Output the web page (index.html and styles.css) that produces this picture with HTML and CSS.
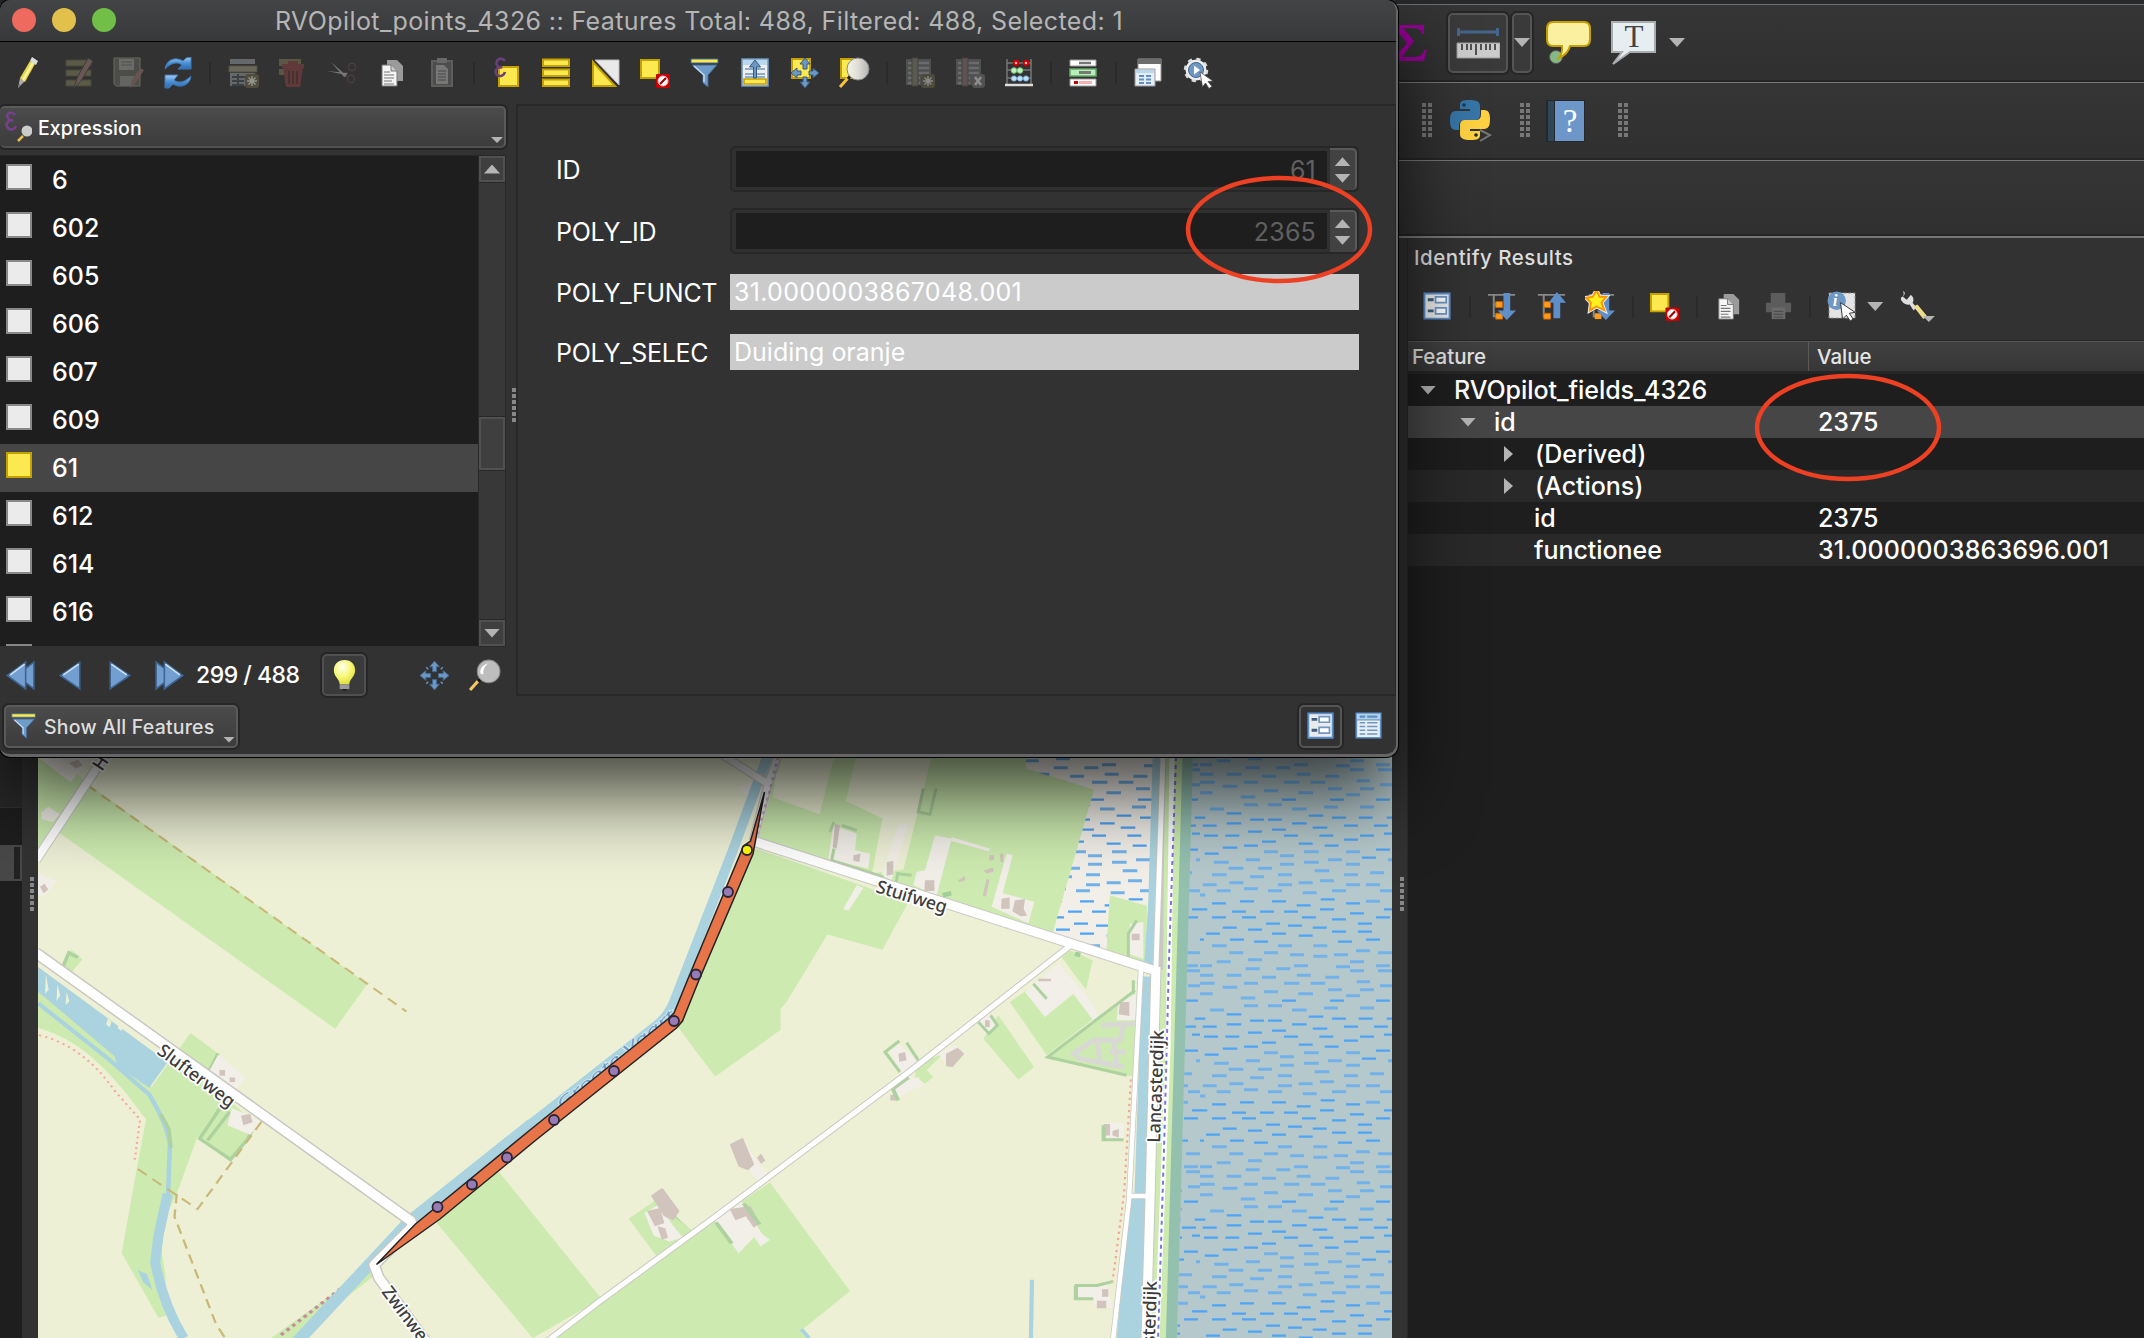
FILE: index.html
```html
<!DOCTYPE html>
<html lang="en">
<head>
<meta charset="utf-8">
<title>RVOpilot_points_4326</title>
<link rel="stylesheet" href="styles.css">
</head>
<body>
<svg class="defs" aria-hidden="true">
  <defs>
    <linearGradient id="steel" x1="0" y1="0" x2="0" y2="1"><stop offset="0" stop-color="#a9cdf0"/><stop offset=".5" stop-color="#4a8fd4"/><stop offset="1" stop-color="#2f6cb0"/></linearGradient>
    <radialGradient id="bulbfill" cx=".4" cy=".3" r=".7"><stop offset="0" stop-color="#fffff0"/><stop offset=".6" stop-color="#f6f672"/><stop offset="1" stop-color="#dfe040"/></radialGradient>
    <linearGradient id="glass" x1="0" y1="0" x2="1" y2="0"><stop offset="0" stop-color="#f4f4ea"/><stop offset=".5" stop-color="#deded6"/><stop offset="1" stop-color="#b4b4b0"/></linearGradient>
    <symbol id="pencil" viewBox="0 0 32 32"><path d="M5 31l2-10 5 3z" fill="#aaa"/><path d="M7 21L17 4l5 3L12 25z" fill="#e8d64a"/><path d="M9 22L19 5l2 1L11 24z" fill="#fbf3a0"/><path d="M17 4l2-4 6 4-2 4z" fill="#ddd"/><path d="M5 31l1-4 2 1z" fill="#777"/></symbol>
    <symbol id="edits" viewBox="0 0 32 32"><path d="M3 3h25v6H3zM3 13h25v6H3zM3 23h25v6H3z" fill="#5b5a48" stroke="#494838"/><path d="M11 31l3-10L25 1l5 3-12 20z" fill="#675854" stroke="#403b39"/></symbol>
    <symbol id="save" viewBox="0 0 32 32"><path d="M2 1h26v28H4l-2-2z" fill="#4c4c49" stroke="#686860"/><path d="M7 2h15v11H7z" fill="#6b6b69"/><path d="M9 5h11M9 8h11" stroke="#50504e"/><path d="M8 19h14v10H8z" fill="#646462"/><path d="M18 31l2-8 8-12 4 2-9 14z" fill="#675450"/></symbol>
    <symbol id="refresh" viewBox="0 0 32 32"><path d="M3 12C4 3 13-1 21 4l3-3 5-1v12H16l4-4C15 4 9 6 3 12z" fill="url(#steel)" stroke="#3c78b8"/><path d="M29 19c-1 9-10 13-18 8l-4 4H3V18h13l-4 5c5 4 11 2 17-4z" fill="url(#steel)" stroke="#3c78b8"/></symbol>
    <symbol id="tablenew" viewBox="0 0 32 32"><path d="M3 2h25v5H3zM3 16h25v13H3z" fill="#66696c"/><path d="M2 9h28v6H2z" fill="#6a685a" stroke="#55513f"/><path d="M5 20h20M5 24h12M5 28h12M11 17v11" stroke="#3d4043" stroke-width="2"/><rect x="18" y="17" width="14" height="14" rx="3" fill="#504d3c"/><path d="M25 19v10M20 24h10M21.500 20.500l7 7M28.500 20.500l-7 7" stroke="#92918a" stroke-width="1.500"/></symbol>
    <symbol id="trash" viewBox="0 0 32 32"><path d="M3 2h22v7H3zM3 12h10v6H3z" fill="#5a5843"/><path d="M7 11h20l-3 19H10zM6 7h22v4H6zM12 4h10v3H12z" fill="#603a3a"/><path d="M13 14v13M17 14v13M21 14v13" stroke="#493030" stroke-width="2"/></symbol>
    <symbol id="cut" viewBox="0 0 32 32"><path d="M1 14l21 2-2 2zM5 5l16 14-3 1z" fill="#777"/><ellipse cx="26" cy="10" rx="3.500" ry="4" fill="none" stroke="#573f3f"/><ellipse cx="25" cy="22" rx="3.500" ry="4" fill="none" stroke="#573f3f"/></symbol>
    <symbol id="copy" viewBox="0 0 32 32"><path d="M11 3h10l6 6v15H11z" fill="#9b9b9b"/><path d="M6 8h9l6 6v15H6z" fill="#f5f5f5" stroke="#777"/><path d="M15 8v6h6" fill="#ccc" stroke="#777"/><path d="M8 15h6M8 18h10M8 21h10M8 24h8M8 27h10" stroke="#777" stroke-width="1.200"/></symbol>
    <symbol id="paste" viewBox="0 0 32 32"><path d="M6 4h20v25H6z" fill="#4d4d4b" stroke="#5d5d5b" stroke-width="2"/><path d="M11 1h10v5H11z" fill="#696969"/><path d="M10 8h8l4 4v15H10z" fill="#777"/><path d="M12 14h8M12 17h8M12 20h8M12 23h8" stroke="#484848"/></symbol>
    <symbol id="eps" viewBox="0 0 32 32"><path d="M9 10h19v19H9z" fill="#fce94f" stroke="#c4a000" stroke-width="2"/><path d="M15 4C11-1 5 3 7 8c1 2 3 3 5 2-6 0-8 5-5 8 3 2 7 1 8-3" fill="none" stroke="#6a3f7c" stroke-width="2.600"/></symbol>
    <symbol id="rows" viewBox="0 0 32 32"><path d="M3 2.500h26v6.500H3zM3 12.500h26v6.500H3zM3 22.500h26v6.500H3z" fill="#fce94f" stroke="#c4a000" stroke-width="2"/></symbol>
    <symbol id="invert" viewBox="0 0 32 32"><path d="M3 5v24h22z" fill="#fce94f" stroke="#c4a000" stroke-width="2"/><path d="M5 3h24v25z" fill="#e9e9e9" stroke="#bbb"/></symbol>
    <symbol id="desel" viewBox="0 0 32 32"><path d="M2 3h18v18H2z" fill="#fce94f" stroke="#c4a000" stroke-width="2"/><rect x="17" y="17" width="14" height="14" rx="1" fill="#c90000"/><circle cx="24" cy="24" r="5" fill="#fff" stroke="#e9b5b5"/><path d="M21 27l6-6" stroke="#a40000" stroke-width="2.200"/></symbol>
    <symbol id="filter" viewBox="0 0 32 32"><path d="M2 2h27v4H2z" fill="#fce94f" stroke="#3c6793"/><path d="M3 8h25l-9 10v12l-5-4v-8z" fill="#6f9bc9" stroke="#41688f"/><path d="M5 9l10 9v7" fill="none" stroke="#c6dcf2" stroke-width="1.500"/></symbol>
    <symbol id="totop" viewBox="0 0 32 32"><path d="M3 2h26v27H3z" fill="#eee" stroke="#6d97c4" stroke-width="1.600"/><path d="M4 3h24v5H4z" fill="#b9d8ee"/><path d="M6 12h20M6 17h20M6 20h20" stroke="#6d97c4" stroke-width="1.500"/><path d="M5 22h22v5H5z" fill="#fce94f" stroke="#c4a000" stroke-width="1.500"/><path d="M14.500 21V10h-4L16 3l5.500 7h-4v11z" fill="#6d97c4" stroke="#355a80"/></symbol>
    <symbol id="pan" viewBox="0 0 32 32"><path d="M3 2h18v19H3z" fill="#fce94f" stroke="#c4a000" stroke-width="2"/><path d="M16 1l5 6h-3v5h-4V7h-3zM16 31l5-6h-3v-5h-4v5h-3zM2 16l6-5v3h4v4H8v3zM30 16l-6-5v3h-4v4h4v3z" fill="#6d97c4" stroke="#355a80"/></symbol>
    <symbol id="zoomsel" viewBox="0 0 32 32"><path d="M3 2h14v19H3z" fill="#fce94f" stroke="#c4a000" stroke-width="2"/><path d="M2 30l8-9" stroke="#f5c242" stroke-width="3"/><path d="M10 22l3-4" stroke="#222" stroke-width="3"/><circle cx="20" cy="12" r="11" fill="url(#glass)" stroke="#888"/></symbol>
    <symbol id="mag" viewBox="0 0 32 32"><path d="M2 30l8-9" stroke="#f5c96a" stroke-width="3"/><path d="M10 22l3-4" stroke="#111" stroke-width="3"/><circle cx="20" cy="12" r="11" fill="#bdbdbd" stroke="#888"/><path d="M12 14c-1-6 4-9 8-10-3 2-6 6-5 11z" fill="#fff"/></symbol>
    <symbol id="colnew" viewBox="0 0 32 32"><path d="M3 2h25v26H3z" fill="#4e5052"/><path d="M5 6h21M5 11h21M5 16h21M5 21h12M5 26h12" stroke="#696b6d" stroke-width="2.500"/><path d="M9 1h6v28H9z" fill="#5b5a50" stroke="#45443d"/><rect x="18" y="17" width="14" height="14" rx="3" fill="#4c4a3c"/><path d="M25 19v10M20 24h10M21.500 20.500l7 7M28.500 20.500l-7 7" stroke="#888" stroke-width="1.400"/></symbol>
    <symbol id="coldel" viewBox="0 0 32 32"><path d="M3 2h25v26H3z" fill="#4e5052"/><path d="M5 6h21M5 11h21M5 16h21M5 21h12M5 26h12" stroke="#696b6d" stroke-width="2.500"/><path d="M9 1h6v28H9z" fill="#5e5252" stroke="#4b4141"/><rect x="19" y="17" width="13" height="14" rx="3" fill="#525252"/><path d="M22 20l6 8M28 20l-6 8" stroke="#8d8d8d" stroke-width="2.500"/></symbol>
    <symbol id="abacus" viewBox="0 0 32 32"><path d="M4 2v25M28 2v25M4 6h24M4 13h24M4 21h24" stroke="#777" stroke-width="1.500"/><path d="M2 28h28" stroke="#ddd" stroke-width="2.500"/><g fill="#f7b5b5" stroke="#c00" stroke-width="2"><circle cx="13" cy="6" r="2.300"/><circle cx="23" cy="6" r="2.300"/></g><g fill="#bdf0bd" stroke="#7cc47c"><circle cx="11" cy="13.500" r="2.800"/><circle cx="17" cy="13.500" r="2.800"/></g><g fill="#bfe0fa" stroke="#7fb4e0"><circle cx="11" cy="21.500" r="2.600"/><circle cx="17" cy="21.500" r="2.600"/><circle cx="23" cy="21.500" r="2.600"/></g></symbol>
    <symbol id="cond" viewBox="0 0 32 32"><path d="M3 3h26v6H3zM3 22h26v7H3z" fill="#fff" stroke="#999"/><path d="M3 12h26v7H3z" fill="#b6f0b6" stroke="#67a867" stroke-width="1.500"/><path d="M12 4.800h12v2.500H12zM12 14h12v3H12z" fill="#777"/><path d="M7 24h4v3H7z" fill="#c00"/><path d="M12 24h13v3H12z" fill="#f7b0b0"/></symbol>
    <symbol id="dock" viewBox="0 0 32 32"><path d="M6 2h23v22H6z" fill="#fff" stroke="#999"/><path d="M6 2h23v5H6z" fill="#6d6d6d"/><path d="M3 12h20v17H3z" fill="#e6eef5" stroke="#999"/><path d="M4 13h18v3H4z" fill="#b9d8ee"/><path d="M7 19h5M14 19h5M7 22.500h5M14 22.500h5M7 26h5M14 26h5" stroke="#5f8fc4" stroke-width="1.800"/></symbol>
    <symbol id="action" viewBox="0 0 32 32"><circle cx="14" cy="13" r="10.500" fill="#eee" stroke="#ddd" stroke-width="3.500" stroke-dasharray="4 4.250"/><circle cx="14" cy="13" r="10" fill="#eee"/><circle cx="14" cy="13" r="7.500" fill="#6d97c4" stroke="#41688f"/><path d="M12 8.500l6 4.500-6 4.500z" fill="#fff"/><path d="M18 15l13 9-5 .5 4 5-3 2-3.500-5.500-3 4z" fill="#fff" stroke="#444" stroke-width=".7"/></symbol>
    <symbol id="epsmag" viewBox="0 0 32 32"><path d="M15 4C11-1 5 3 8 7c1 2 3 3 5 2-6 0-8 5-5 8 3 3 7 1 8-2" fill="none" stroke="#74418a" stroke-width="2.600"/><path d="M18 30l5-5" stroke="#e8c050" stroke-width="2.500"/><circle cx="27" cy="20" r="5.500" fill="#ccc"/></symbol>
    <symbol id="form" viewBox="0 0 32 32"><path d="M2.500 2.500h26v26h-26z" fill="#ebebeb" stroke="#5a8fd0" stroke-width="2"/><path d="M6 9h6M6 20.500h6" stroke="#3f5f7a" stroke-width="3"/><path d="M14 6h11v6H14zM14 17.500h11v6H14z" fill="#fff" stroke="#6d97c4" stroke-width="1.800"/></symbol>
    <symbol id="table" viewBox="0 0 32 32"><path d="M2.500 2.500h26v26h-26z" fill="#e9eef3" stroke="#5a8fd0" stroke-width="1.800"/><path d="M3 3h25v6H3z" fill="#b5d3e8"/><path d="M6 6h6M14 6h11" stroke="#5f8fc4" stroke-width="2.600"/><path d="M3 9.500h25M6 12.500h6M14 12.500h11M6 16.500h6M14 16.500h11M6 20.500h6M14 20.500h11M6 24.500h6M14 24.500h11" stroke="#6d97c4" stroke-width="1.400"/></symbol>
    <symbol id="cross" viewBox="0 0 32 32"><path d="M16 1l5 6h-3v5h-4V7h-3zM16 31l5-6h-3v-5h-4v5h-3zM1 16l6-5v3h5v4H7v3zM31 16l-6-5v3h-5v4h5v3z" fill="#6d97c4" stroke="#41688f"/><path d="M9 8L8 9M23 8l1 1M9 24l-1-1M23 24l1-1" stroke="#6d97c4" stroke-width="3"/></symbol>
    <symbol id="prev" viewBox="0 0 32 32"><path d="M25 3v26L6 16z" fill="#729fcf" stroke="#3d6491" stroke-width="1.500"/><path d="M24 5L9 15.500" stroke="#cfe2f7" stroke-width="1.500"/></symbol>
    <symbol id="first" viewBox="0 0 32 32"><path d="M29 3v26L12 16z" fill="#729fcf" stroke="#3d6491" stroke-width="1.500"/><path d="M21 3v26L3 16z" fill="#729fcf" stroke="#3d6491" stroke-width="1.500"/><path d="M20 5L6 15.500" stroke="#cfe2f7" stroke-width="1.500"/></symbol>
    <symbol id="bulb" viewBox="0 0 32 32"><path d="M16 0c7 0 11 5 11 10.500 0 7-6 9-6 14.500H11c0-5.500-6-7.500-6-14.500C5 5 9 0 16 0z" fill="url(#bulbfill)"/><path d="M11 25h10v5H11z" fill="#999"/><path d="M14 30h4v2h-4z" fill="#222"/></symbol>
    <symbol id="treedown" viewBox="0 0 32 32"><path d="M2 4h28M8 4v22h6M8 14h6" fill="none" stroke="#888" stroke-width="2"/><path d="M10 11h7v6h-7zM10 23h7v6h-7z" fill="#ff9a1f" stroke="#c76a00"/><path d="M18 2h7v18h6l-9.500 10L12 20h6z" fill="#5f8fc9"/></symbol>
    <symbol id="treeup" viewBox="0 0 32 32"><path d="M2 4h28M8 4v22h6M8 14h6" fill="none" stroke="#888" stroke-width="2"/><path d="M8 11h7v6H8zM8 23h7v6H8z" fill="#ff9a1f" stroke="#c76a00"/><path d="M18 28h7V12h6L21.500 1 13 12h5z" fill="#5f8fc9"/></symbol>
    <symbol id="treestar" viewBox="0 0 32 32"><path d="M4 4h26M9 20v6h6" fill="none" stroke="#888" stroke-width="2"/><path d="M10 23h7v6h-7z" fill="#ff9a1f"/><path d="M18 2h7v18h6l-9.500 10L12 20h6z" fill="#5f8fc9"/><path d="M12-1l3 7h7l-5 6 3 8-8-4-7 4 1-8-5-5 7-1z" fill="#fff01f" stroke="#eee" stroke-width="4"/><path d="M12-1l3 7h7l-5 6 3 8-8-4-7 4 1-8-5-5 7-1z" fill="#fff01f" stroke="#ff9500" stroke-width="2"/></symbol>
    <symbol id="print" viewBox="0 0 32 32"><path d="M8 2h15v10H8zM3 12h26v10H3z" fill="#5c5c5c"/><path d="M9 17h14v12H9z" fill="#6a6a6a"/><path d="M11 21h10M11 24h10M11 27h10" stroke="#484848"/></symbol>
    <symbol id="identify" viewBox="0 0 32 32"><path d="M2 2h27v26H2z" fill="#e4e4e4" stroke="#777" stroke-dasharray="3 2"/><circle cx="10" cy="10" r="9.500" fill="#6d97c4"/><path d="M14 12l15 10-6 1 4 6-3 2-4-6-4 4z" fill="#fff" stroke="#333"/></symbol>
    <symbol id="wrench" viewBox="0 0 32 32"><path d="M3 0c3 1 2 4 0 6l4 3 4-5C15 6 14 11 13 12l4 5-3 3-4-6C5 15 0 10 1 7c2-1 4-3 2-7z" fill="#ddd"/><path d="M14 16l4-2 10 12-4 3z" fill="#f0dd8c"/></symbol>
  </defs>
</svg>

<div class="app">
  <div class="app-edge"></div>
  <div class="toolbar">
    <svg class="sigma" width="51" height="40" viewBox="0 0 51 40"><path d="M-2 2H27V11H25Q24 5 17 5H6L17 18 5 34H18Q26 34 27 27H30L27 38H-3V35L10 20-2 5z" fill="#990099"/></svg>
    <span class="tool-pressed"><svg width="44" height="32" viewBox="0 0 44 32"><path d="M2 5h40M2.500 1v8M41.500 1v8" stroke="#46658b" stroke-width="3"/><path d="M1 16h43v15H1z" fill="#ccc" stroke="#999"/><path d="M6 17v6M11 17v6M15 17v6M20 17v11M25 17v6M30 17v6M34 17v6M39 17v6" stroke="#444" stroke-width="1.800"/></svg></span>
    <span class="tool-drop"><i class="tri"></i></span>
    <svg class="bubble" width="46" height="46" viewBox="0 0 46 46"><circle cx="11" cy="37" r="6.500" fill="#86b886" stroke="#555"/><path d="M8 2h31q6 0 6 7v10q0 7-6 7H25q-2 8-11 12 4-6 3-12H8q-6 0-6-7V9q0-7 6-7z" fill="#fbf0a0" stroke="#c4a000" stroke-width="2"/></svg>
    <svg class="note" width="46" height="46" viewBox="0 0 46 46"><path d="M1 2h43v30H19L2 44l9-12H1z" fill="#e7eef2" stroke="#a9adb0" stroke-width="2"/><text x="23" y="27" text-anchor="middle" font-family="Liberation Serif, serif" font-size="31" fill="#444">T</text></svg>
    <i class="tri"></i>
  </div>
  <div class="toolbar second">
    <i class="grip"></i>
    <svg class="python" width="44" height="44" viewBox="0 0 44 44"><path d="M20 1c8 0 11 2 11 6v9q0 5-5 5H15q-5 0-5 6v4H7c-5 0-6-4-6-9 0-8 2-10 7-10h13v-2h-10V6c0-4 3-5 9-5z" fill="#3776a8"/><path d="M32 11h3c5 0 6 4 6 9 0 8-2 10-7 10H21v2h10v4c0 4-3 5-9 5-8 0-11-2-11-6v-9q0-5 5-5h11q5 0 5-6z" fill="#ffd242"/><circle cx="15" cy="6" r="1.800" fill="#163a55"/><circle cx="27" cy="36" r="1.800" fill="#222"/><path d="M31 31l10 5-10 6" fill="none" stroke="#777" stroke-width="2"/></svg>
    <i class="grip"></i>
    <svg class="book" width="41" height="44" viewBox="0 0 41 44"><path d="M1 1h39v42H1z" fill="#24282c"/><path d="M3 2h6v40H3z" fill="#2f4558"/><path d="M10 2h29v40H10z" fill="#6d97c9"/><text x="25" y="33" text-anchor="middle" font-family="Liberation Serif, serif" font-size="33" fill="#fff">?</text></svg>
    <i class="grip"></i>
  </div>
  <div class="toolbar empty"></div>
  <div class="body">
    <div class="left-dock"><div class="left-list"></div><div class="left-sel"></div></div>
    <div class="splitter"><i class="dots"></i></div>
    <svg class="map" viewBox="38 238 1354 1100" width="1354" height="1100">
      <defs>
        <pattern id="tidal" x="1200" y="757" width="192" height="201" patternUnits="userSpaceOnUse">
          <path transform="scale(.33333)" stroke="#4ea4f6" stroke-width="7" fill="none" d="M246 128h42M390 128h42M528 128h42M80 169h44M326 176h44M-26 182h42M396 182h42M476 182h42M560 182h42M150 188h42M204 188h42M80 199h44M276 199h44M8 206h42M432 206h42M522 206h42M338 212h44M216 218h42M144 224h42M552 230h42M12 236h42M76 236h42M252 236h42M358 236h42M480 236h42M432 248h42M186 254h42M296 260h42M132 266h42M374 266h42M68 272h44M528 278h42M14 290h42M486 302h42M290 445h42M362 427h42M120 433h42M216 433h42M36 439h42M438 439h42M-20 457h42M360 457h42M552 457h42M96 464h42M180 464h42M252 464h42M450 469h42M36 481h42M126 481h42M306 481h42M528 481h42M396 487h42M198 500h42M474 500h42M264 506h42M68 512h42M338 512h42M144 518h42M396 524h42M474 524h42M18 530h42M216 530h42M296 536h42M-30 548h42M90 548h42M498 548h42M162 554h42M414 554h42"/>
          <path transform="scale(.33333)" stroke="#72b2ea" stroke-width="9" fill="none" d="M137 32h42M229 32h42M408 26h42M450 38h42M534 38h42M0 52h40M80 52h44M290 52h42M186 58h42M376 58h42M-2 76h46M132 76h42M252 76h46M332 76h44M470 71h40M540 83h42M68 88h44M384 95h42M480 95h42M192 101h42M-2 107h40M295 107h44M438 113h42M122 120h44M132 143h42M204 143h42M372 150h42M480 150h42M30 156h42M276 156h44M192 284h42M312 284h44M438 284h42M240 296h42M138 308h42M384 308h42M564 308h42M42 316h44M312 316h44M240 322h42M438 322h42M86 334h44M174 334h42M344 341h44M510 347h42M36 353h44M234 353h42M432 353h42M150 359h42M360 371h42M88 377h42M296 377h42M8 383h42M234 383h42M438 383h42M498 383h42M132 395h42M50 401h42M204 401h42M396 401h42M540 401h42M308 407h42M498 433h42M-26 414h42M36 566h44M234 566h42M340 566h42M468 581h42M88 587h42M192 587h42M534 587h42M270 593h42M402 593h42M144 5h42M50 11h42M450 11h42M0 23h36M282 23h42M528 23h42M340 598h42"/>
        </pattern>
      </defs>
      <rect x="38" y="238" width="1354" height="1100" fill="#edf0d5"/>

      <!-- western fields and water -->
      <g transform="matrix(.4592 0 0 .3814 0 740)">
        <g fill="#cdebb0">
          <path d="M83 30h30L195 118 800 640 730 757 125 240 83 310z"/>
          <path d="M83 640V755C190 790 260 900 318 995L300 1110 265 1345 345 1515 365 1508 360 1400 345 1290 385 1190 430 1040 500 1105 540 1045 560 1010 495 940 440 900 475 822 415 768 365 850 330 910z"/>
          <path d="M1085 1130L1310 1465 1160 1568 950 1265z"/>
          <path d="M1478 752L1560 880 1700 760 1700 300z"/>
          <path d="M1200 1568L1568 1240V1568z"/>
          <path d="M1370 1255L1430 1205 1510 1290 1430 1355z"/>
          <path d="M135 590l20-40 25 25-25 35z"/>
          <path d="M590 1568L815 1375 820 1400 640 1568z"/>
        </g>
        <path fill="#aad3df" d="M83 595L365 845 325 912 255 855 250 830 83 660zM300 1390l20 10 12 42-20-20z"/>
        <g fill="#edf0d5"><path d="M235 730l8 8-4 15-8-8zM260 745l8 8-4 10-8-8zM100 615l6 40-8 10zM125 640l6 30-8 15zM145 660l6 25-8 10z"/></g>
        <g fill="none" stroke="#aad3df">
          <path stroke-width="10" d="M83 690L240 840 325 930Q365 1010 370 1060L366 1190"/>
          <path stroke-width="22" d="M365 1190L345 1300 338 1370Q355 1480 400 1568"/>
        </g>
        <g fill="none" stroke="#aed1a0" stroke-width="8">
          <path d="M475 822L455 870M485 955L435 1045 502 1100 540 1045 555 1010M500 975L452 1050M135 600l15-42 20 12M350 980l18 40 4 50"/>
          <path d="M1430 1205l80 95"/>
        </g>
        <g fill="#f2efe9"><path d="M83 45h120l-50 65zM90 190l15-15 25 20-15 20-25-8zM83 350l40 20-25 38H83zM455 870l20-45 60 60-25 40zM505 965l65 35-25 35-50-25zM1405 1240l25-20 60 85-25 10-45-15z"/></g>
        <g fill="#d0c4bc"><path d="M150 60l20-8 10 15-15 8zM87 385l10-8 8 15-10 10zM478 865h12v15h-12zM500 885h12v12h-12zM525 985l20-5 5 22-20 8zM1418 1195l22-20 35 60-12 25-18-12zM1410 1235l25-8 5 35-18 8zM1430 1275l15 5 5 25-12 5z"/></g>
        <path fill="none" stroke="#f6a99c" stroke-width="5" stroke-dasharray="5 9" d="M85 774Q180 800 250 920L305 995 293 1105"/>
        <g fill="none" stroke="#c9b878" stroke-width="5" stroke-dasharray="25 16">
          <path d="M190 118L885 712M300 1125L430 1230 570 1000M385 1190L380 1250 470 1530 490 1568"/>
        </g>
        <path d="M612 1560L815 1370 845 1330" fill="none" stroke="#c98a9a" stroke-width="8" stroke-dasharray="8 9"/>
      </g>

      <!-- eastern fields -->
      <g transform="matrix(.523 0 0 .3814 600 740)">
        <g fill="#cdebb0">
          <path d="M335 30H820L945 130 865 510 700 455 530 375 300 265 325 150z"/>
          <path d="M300 285L590 425 540 550 435 510 355 690 220 882 145 745 280 310z"/>
          <path d="M975 408L1045 435V600L968 560z"/>
          <path d="M1070 30H1115L1085 1568H1055z"/>
          <path d="M325 1160L478 1445 388 1545 400 1568H-80L215 1260z"/>
          <path d="M55 1255L105 1210 175 1285 110 1350z"/>
        </g>
        <g fill="#edf0d5">
          <path d="M345 30L450 30 420 195 330 150zM490 40H635L580 340 520 350 540 205 470 160z"/>
        </g>
        <path fill="#b5c8cb" d="M1130 30H1520V1568H1100z"/>
        <path fill="#94c0ae" d="M1114 30H1134L1103 1568H1082z"/>
        <path fill="#f2efe9" d="M815 30H1060V435L975 408 968 560 865 510 945 130 815 75z"/>
      </g>

      <!-- tidal symbols on the lake and the flats -->
      <path fill="url(#tidal)" d="M1193 751H1395V1345H1177z"/>
      <path fill="url(#tidal)" d="M1026 751H1154V906L1110 896 1106 954 1052 935 1094 790 1026 769z"/>

      <g transform="matrix(.523 0 0 .3814 600 740)">
        <path fill="#cdebb0" d="M975 408L1045 435V600L968 560z"/>
        <path fill="#aad3df" d="M1057 30H1078L1060 600H1040L1048 435zM1036 620H1058L1042 1568H988L1012 1190 1022 1190z"/>
        <path fill="none" stroke="#aad3df" stroke-width="8" d="M826 1415L824 1568M385 1545l15 23"/>
        <g fill="#f2efe9">
          <path d="M265 125l30-20 20 20-25 30zM245 1060l25-15 50 95-15 20zM85 1240l25-20 48 85-25 10-30-15zM220 1260l50-50 40 85 15 15-18 18-12-25-30 43zM960 1005h42v45h-42zM910 1435l60-5 10 60-32-5-5-20h-33zM590 880l30 20-60 45-10-10z"/>
        </g>
        <g fill="#d0c4bc">
          <path d="M248 1060l25-17 22 70-12 15-18-10zM300 1095l8-10 8 18-8 8zM98 1195l22-20 32 60-12 25-18-12zM90 1235l25-8 8 40-18 8zM110 1275l15 5 5 25-12 5zM248 1230l40-8 18 45-12 12-15-30-20 10zM963 1007h12v30h-12zM980 1025l12-5v22l-12-5zM960 1440h12v20h-12zM950 1470h18v20h-18zM555 930h12v15h-12z"/>
        </g>
        <g fill="none" stroke="#aed1a0" stroke-width="8"><path d="M222 1265l30 55M275 1215l30 55M963 1010v38h38M910 1430v35h33M980 1420l-30 10h-42M590 885l-30 30 10 30"/></g>
        <path fill="none" stroke="#f4a58f" stroke-width="4" stroke-dasharray="6 10" d="M1015 890L1002 1190 980 1420"/>
      </g>

      <!-- farms along Stuifweg -->
      <g transform="matrix(.33333 0 0 .33333 820 757)">
        <g fill="#cdebb0"><path d="M725 600L750 580 818 610 798 698 765 655zM570 735L620 700 670 770 760 705 820 785 680 895zM490 845L535 775 642 930 595 968zM680 905L945 705V960z"/><path d="M290 920l80-30-50 50 20 20-25 20-30-20z"/></g>
        <g fill="#f2efe9">
          <path d="M40 205l70 25-5 50 45 10-5 45-120-30zM235 205l30-5-50 170-30-15zM345 235l50 10-45 170-70-30 10-40 25-5zM395 240l115 35-4 8-115-32zM560 290l18 4-30 115 95 25-18 65-110-50zM930 500l40-5v110l-45-15zM110 385l20 8-45 68-15-5zM715 620l80 90 40 65-15 15-60-80-85 70-60-75zM480 790l25-20 30 30-30 30zM210 880l25-20 60 55-50 35zM355 890l50-25 30 25-50 40zM250 985l45-25 15 25-10 5zM895 740l50-30v80h-55z"/>
        </g>
        <g fill="#d0c4bc">
          <path d="M45 200l15 5-10 70-12-4zM100 295l22-5-4 25-18-4zM315 370h28v32h-30zM545 425l24-4v34h-26zM585 430l30-4-4 30 10 20-20 2-24-15zM490 340l30-8v12l-20 6zM500 365l8 4-10 50-10-4zM415 370l18-12 4 12-20 6zM200 315l20-3v40l-20 4zM235 890l20-5 5 25-22 4zM378 890l35-18 20 18-35 40-20-2zM900 735h28v42l-32-5zM935 530h24v20h-24zM655 665h38v8h-38zM495 790h14v20h-14zM508 295h14v15h-14zM540 290h10v25h-8z"/>
        </g>
        <g fill="none" stroke="#aed1a0" stroke-width="9">
          <path d="M30 225L42 195M65 205L110 220M42 275L35 310 190 360M310 95L295 165 330 172 348 95M275 355l-42-5-5 30M640 680l40 45M945 700L683 900 920 955M940 670v40M475 795l32 35 25-25-20-30M240 945L195 885 238 852M260 857L295 910M950 490l-25 40v80"/>
        </g>
        <path fill="none" stroke="#d9d8d4" stroke-width="15" d="M945 800L845 805M910 800L900 850 820 850 760 890 780 905 910 930M830 850L840 910M880 850L890 920M870 885h45" />
        <path fill="none" stroke="#9fd09a" stroke-width="14" d="M368 415l26-6M765 590l16 4"/>
      </g>

      <!-- canal beside the selected parcel -->
      <g fill="none" stroke="#aad3df">
        <path stroke-width="12" d="M296 1343L409 1222 532 1124"/>
        <path stroke-width="10" d="M530 1125L655 1027Q668 1017 674 1002L733 850 769 752"/>
      </g>

      <!-- roads: casing, then surface -->
      <g fill="none" stroke="#c9c8c2" stroke-linejoin="round">
        <path stroke-width="10" d="M36 860L104 757"/>
        <path stroke-width="12" d="M36 953L411 1221Q414 1226 408 1231L374 1265 379 1278 432 1350"/>
        <path stroke-width="7" d="M545 1343L600 1301 715 1217 909 1072 1071 945"/>
        <path stroke-width="11" d="M753 841L1156 971"/>
        <path stroke-width="9" d="M723 755L768 784 753 841M778 755L768 784"/>
        <path stroke-width="6" d="M1162 757L1160 970M1141 968L1129 1200 1113 1340M1131 1196H1149"/>
        <path stroke-width="11" d="M1156 967L1150 1200 1146 1340"/>
        <path stroke-width="7" d="M1163 757L1156 967"/>
      </g>
      <g fill="none" stroke="#fff" stroke-linejoin="round">
        <path stroke-width="8" d="M36 860L104 757"/>
        <path stroke-width="9" d="M36 953L411 1221Q414 1226 408 1231L374 1265 379 1278 432 1350"/>
        <path stroke-width="5" d="M545 1343L600 1301 715 1217 909 1072 1071 945"/>
        <path stroke-width="9" d="M753 841L1156 971"/>
        <path stroke-width="6.500" stroke="#eee" d="M723 755L768 784 753 841M778 755L768 784"/>
        <path stroke-width="4.500" d="M1141 968L1129 1200 1113 1340M1131 1196H1149"/>
        <path stroke-width="9" d="M1156 967L1150 1200 1146 1340"/>
        <path stroke-width="5" d="M1163 757L1156 967M1172 757L1168 1050 1157 1340"/>
      </g>
      <path d="M778 757L770 790 756 838" fill="none" stroke="#c8a8c4" stroke-width="2.500" stroke-dasharray="3 4"/>
      <path d="M1176 757L1169 960 1164 1150 1158 1340" fill="none" stroke="#7b74e0" stroke-width="2" stroke-dasharray="4 4"/>

      <g class="labels">
        <text transform="translate(156 1053) rotate(37)" textLength="92">Slufterweg</text>
        <text transform="translate(875 892) rotate(17)" textLength="73">Stuifweg</text>
        <text transform="translate(1160 1143) rotate(-88)" textLength="113">Lancasterdijk</text>
        <text transform="translate(1153 1394) rotate(-88)" textLength="113">Lancasterdijk</text>
        <text transform="translate(381 1292) rotate(53)" textLength="74">Zwinweg</text>
        <text transform="translate(102 772) rotate(-57)">Ho</text>
      </g>
      <text class="water-label" transform="translate(561 1110) rotate(-39)" textLength="148" lengthAdjust="spacingAndGlyphs">Groote Vaart</text>

      <path d="M376.500 1264.500L397 1243 415.500 1224 530 1130 668 1019 674 1013 687.500 980 743.500 846 750.500 841 764.500 792 753 854 699 980 682.500 1021 676.500 1028 536 1140 440 1219z" fill="#e8744a" stroke="#232323" stroke-width="1.500"/>
      <g fill="#967bb6" stroke="#2d2433" stroke-width="1.800">
        <circle cx="728" cy="892" r="5"/><circle cx="696" cy="974.500" r="5"/><circle cx="674" cy="1021" r="5"/><circle cx="614" cy="1071" r="5"/><circle cx="554" cy="1120" r="5"/><circle cx="507" cy="1157.500" r="5"/><circle cx="472" cy="1184.500" r="5"/><circle cx="437.500" cy="1207" r="5"/>
        <circle cx="747" cy="850" r="5" fill="#ff0"/>
      </g>
    </svg>
    <div class="splitter right"><i class="dots"></i></div>
    <section class="identify">
      <h2>Identify Results</h2>
      <div class="id-tools">
        <svg class="ic"><use href="#form"/></svg><i class="sep"></i>
        <svg class="ic"><use href="#treedown"/></svg><svg class="ic"><use href="#treeup"/></svg><svg class="ic"><use href="#treestar"/></svg><i class="sep"></i>
        <svg class="ic"><use href="#desel"/></svg><i class="sep"></i>
        <svg class="ic"><use href="#copy"/></svg><svg class="ic"><use href="#print"/></svg><i class="sep"></i>
        <span class="ident"><svg class="ic"><use href="#identify"/></svg><b>i</b></span><i class="tri"></i>
        <span class="wrench"><svg class="ic"><use href="#wrench"/></svg><i class="tri small"></i></span>
      </div>
      <div class="tree">
        <div class="tree-head"><span>Feature</span><span>Value</span></div>
        <div class="tree-row l0"><span><i class="tri"></i>RVOpilot_fields_4326</span><span></span></div>
        <div class="tree-row l1 sel"><span><i class="tri"></i>id</span><span>2375</span></div>
        <div class="tree-row l2"><span><i class="tri closed"></i>(Derived)</span><span></span></div>
        <div class="tree-row l2 alt"><span><i class="tri closed"></i>(Actions)</span><span></span></div>
        <div class="tree-row l3"><span>id</span><span>2375</span></div>
        <div class="tree-row l3 alt"><span>functionee</span><span class="num">31.0000003863696.001</span></div>
      </div>
    </section>
  </div>
</div>

<div class="dialog">
  <header class="titlebar"><i class="light red"></i><i class="light yellow"></i><i class="light green"></i><span class="title">RVOpilot_points_4326 :: Features Total: 488, Filtered: 488, Selected: 1</span></header>
  <div class="actions">
    <svg class="ic"><use href="#pencil"/></svg><svg class="ic"><use href="#edits"/></svg><svg class="ic"><use href="#save"/></svg><svg class="ic"><use href="#refresh"/></svg><i class="sep"></i>
    <svg class="ic"><use href="#tablenew"/></svg><svg class="ic"><use href="#trash"/></svg><svg class="ic"><use href="#cut"/></svg><svg class="ic"><use href="#copy"/></svg><svg class="ic"><use href="#paste"/></svg><i class="sep"></i>
    <svg class="ic"><use href="#eps"/></svg><svg class="ic"><use href="#rows"/></svg><svg class="ic"><use href="#invert"/></svg><svg class="ic"><use href="#desel"/></svg><svg class="ic"><use href="#filter"/></svg><svg class="ic"><use href="#totop"/></svg><svg class="ic"><use href="#pan"/></svg><svg class="ic"><use href="#zoomsel"/></svg><i class="sep"></i>
    <svg class="ic"><use href="#colnew"/></svg><svg class="ic"><use href="#coldel"/></svg><svg class="ic"><use href="#abacus"/></svg><i class="sep"></i>
    <svg class="ic"><use href="#cond"/></svg><i class="sep"></i>
    <svg class="ic"><use href="#dock"/></svg><svg class="ic"><use href="#action"/></svg>
  </div>
  <div class="content">
    <div class="side">
      <div class="combo"><svg class="ic"><use href="#epsmag"/></svg><span>Expression</span><i class="tri small"></i></div>
      <div class="list-wrap">
        <ul class="list">
          <li><i></i>6</li><li><i></i>602</li><li><i></i>605</li><li><i></i>606</li><li><i></i>607</li><li><i></i>609</li><li class="sel"><i></i>61</li><li><i></i>612</li><li><i></i>614</li><li><i></i>616</li><li><i></i></li>
        </ul>
        <div class="scroll"><span class="btn"><i class="tri up"></i></span><span class="track"></span><span class="thumb"></span><span class="track low"></span><span class="btn"><i class="tri"></i></span></div>
      </div>
      <div class="nav">
        <svg class="ic"><use href="#first"/></svg><svg class="ic"><use href="#prev"/></svg><svg class="ic flip"><use href="#prev"/></svg><svg class="ic flip"><use href="#first"/></svg>
        <span class="count">299 / 488</span>
        <span class="bulb"><svg class="ic"><use href="#bulb"/></svg></span>
        <svg class="ic cross"><use href="#cross"/></svg><svg class="ic"><use href="#mag"/></svg>
      </div>
    </div>
    <div class="handle"><i class="dots"></i></div>
    <div class="form">
      <div class="field"><label>ID</label><div class="spin"><span>61</span><b><i class="tri up"></i><i class="tri"></i></b></div></div>
      <div class="field"><label>POLY_ID</label><div class="spin"><span>2365</span><b><i class="tri up"></i><i class="tri"></i></b></div></div>
      <div class="field line"><label>POLY_FUNCT</label><div class="text num">31.0000003867048.001</div></div>
      <div class="field line"><label>POLY_SELEC</label><div class="text">Duiding oranje</div></div>
    </div>
  </div>
  <footer class="foot">
    <div class="show"><svg class="ic"><use href="#filter"/></svg><span>Show All Features</span><i class="tri small"></i></div>
    <div class="views"><span class="view on"><svg class="ic"><use href="#form"/></svg></span><span class="view"><svg class="ic"><use href="#table"/></svg></span></div>
  </footer>
</div>

<svg class="marks" viewBox="0 0 2144 1338" width="2144" height="1338"><ellipse cx="1279" cy="229.500" rx="91" ry="51.500"/><ellipse cx="1848" cy="427.500" rx="91" ry="51.500"/></svg>
</body>
</html>
```

FILE: styles.css
```css
* { box-sizing: border-box; }
body { margin: 0; width: 2144px; height: 1338px; overflow: hidden; position: relative; background: #1e1e1e; color: #fff; font-family: Inter, "Noto Sans", sans-serif; font-size: 25px; }
svg { display: block; flex: none; }
i, b { font-style: normal; font-weight: 400; flex: none; }
.defs { position: absolute; width: 0; height: 0; }
.ic { width: 32px; height: 32px; overflow: visible; }
.tri { display: block; width: 16px; height: 9px; background: #b4b4b4; clip-path: polygon(0 0, 100% 0, 50% 100%); }
.tri.up { clip-path: polygon(50% 0, 100% 100%, 0 100%); }
.tri.small { width: 12px; height: 6px; }
.tri.closed { width: 9px; height: 16px; clip-path: polygon(0 0, 100% 50%, 0 100%); }
.dots { display: block; width: 4px; height: 34px; background: repeating-linear-gradient(#888 0 4px, transparent 4px 6px); }

/* main window */
.app { display: flex; flex-direction: column; height: 1338px; background: #323232; }
.app > * { flex: none; }
.app-edge { height: 5px; background: #28292b; border-bottom: 1px solid #707070; }
.toolbar { display: flex; align-items: center; height: 77px; padding-left: 1397px; border-bottom: 2px solid #252525; background: linear-gradient(#353535, #303030); }
.toolbar.second { height: 78px; border-top: 1px solid #777; }
.toolbar.empty { height: 76px; border-top: 1px solid #777; }
.tool-pressed, .tool-drop { display: flex; align-items: center; justify-content: center; height: 60px; border: 2px solid #555; border-radius: 5px; box-shadow: 0 0 0 2px #262626; background: #3a3a3a; }
.tool-pressed { width: 60px; margin-right: 4px; }
.tool-drop { width: 20px; margin-right: 13px; }
.note { margin: 0 12px 0 20px; }
.grip { width: 10px; height: 36px; margin-left: 25px; background: linear-gradient(90deg, transparent 4px, #343434 4px 6px, transparent 6px), repeating-linear-gradient(#777 0 4px, transparent 4px 6px); }
.python { margin: 0 0 0 17px; }
.python + .grip { margin-left: 27px; }
.book { margin-left: 15px; }
.book + .grip { margin-left: 32px; }
.body { display: flex; height: 1102px; border-top: 2px solid #777; }
.left-dock { flex: none; width: 22px; padding-top: 569px; background: #292929; }
.left-list { height: 38px; background: #1e1e1e; border-top: 1px solid #333; }
.left-sel { height: 493px; background: linear-gradient(90deg, transparent 14px, #222 14px 20px, transparent 20px) 0 2px / 100% 32px no-repeat, linear-gradient(#484848 36px, #1e1e1e 36px); }
.splitter { flex: none; width: 16px; background: #323232; padding: 639px 0 0 8px; }
.splitter.right { border-right: 1px solid #292929; }
.map { flex: none; }
.labels { font: 500 18px "Noto Sans", sans-serif; fill: #3c3c3c; stroke: #fff; stroke-width: 3.500px; paint-order: stroke; stroke-linejoin: round; }
.water-label { font: italic 14px "Noto Sans", sans-serif; fill: #6f9ccb; stroke: #d3e8ee; stroke-width: 1.500px; paint-order: stroke; }

/* identify panel */
.identify { flex: 1; min-width: 0; display: flex; flex-direction: column; overflow: hidden; }
.identify h2 { flex: none; margin: 0; padding-left: 6px; height: 41px; font: 500 20.500px/39px Inter, sans-serif; letter-spacing: .5px; color: #dedede; }
.id-tools { flex: none; display: flex; align-items: center; height: 61px; padding: 0 0 6px 5px; }
.id-tools .ic { width: 31px; height: 31px; margin: 0 9.300px; }
.sep { width: 2px; height: 22px; margin: 0 6.500px; background: #2a2a2a; }
.id-tools .sep { margin: 0 6.200px; }
.ident { position: relative; }
.ident b { position: absolute; left: 15px; top: 0; font: italic bold 17px/20px "Liberation Serif", serif; }
.wrench { display: flex; margin-left: 7px; align-items: flex-end; }
.wrench .tri { margin-left: -17px; }
.tree { flex: 1; background: #1e1e1e; border-top: 1px solid #262626; }
.tree-head, .tree-row { display: flex; align-items: center; white-space: nowrap; }
.tree-head { height: 33px; font-size: 20.500px; font-weight: 500; border-top: 1px solid #575757; border-bottom: 3px solid #262626; background: linear-gradient(#404040, #373737); }
.tree-head span { flex: none; width: 400px; padding-left: 4px; color: #e4e4e4; }
.tree-head span + span { border-left: 1px solid #5a5a5a; padding-left: 8px; line-height: 29px; }
.tree-row { height: 32px; font-weight: 450; letter-spacing: -.05px; }
.tree-row > span { display: flex; align-items: center; flex: none; width: 410px; }
.tree-row .num { letter-spacing: .12px; }
.tree-row.sel { background: #464646; }
.tree-row.alt { background: #292929; }
.l0 .tri { margin: 0 18px 0 12px; }
.l1 .tri { margin: 0 18px 0 52px; }
.l2 .tri { margin: 0 22px 0 96px; }
.l3 > span:first-child { padding-left: 126px; }

/* attribute table dialog */
.dialog { position: absolute; left: 0; top: 0; width: 1398px; height: 757px; display: flex; flex-direction: column; background: #323232; border-right: 2px solid #666; border-bottom: 3px solid #666; border-radius: 10px 12px 12px 10px; box-shadow: 0 0 0 1px #000, 0 36px 80px rgba(0, 0, 0, .75); overflow: clip; }
.dialog > * { flex: none; }
.titlebar { display: flex; align-items: center; gap: 16px; height: 42px; padding-left: 12px; border-bottom: 1px solid #000; background: linear-gradient(#434446, #38393b); }
.light { width: 24px; height: 24px; border-radius: 50%; margin-bottom: 2px; }
.red { background: #ee6a5f; } .yellow { background: #e1c04c; } .green { background: #72bf47; }
.title { margin-left: 143px; font-size: 25px; letter-spacing: .39px; color: #b5b5b5; white-space: nowrap; }
.actions { display: flex; align-items: center; height: 62px; padding: 0 0 1px 4px; }
.actions .ic { margin: 0 8.860px; }
.content { display: flex; height: 592px; }
.side { width: 506px; display: flex; flex-direction: column; padding-top: 2px; }
.side > * { flex: none; }
.combo { display: flex; align-items: center; height: 42px; margin-bottom: 7px; border: 2px solid #5a5a5a; border-left: 0; border-bottom-color: #505050; border-radius: 5px; background: linear-gradient(#4b4b4b, #3c3c3c); box-shadow: 0 0 0 2px #262626; font-size: 19.500px; letter-spacing: .1px; font-weight: 500; }
.combo .ic { margin-right: 6px; }
.combo span, .show span { padding-top: 1px; }
.combo .tri, .show .tri { margin-left: auto; align-self: flex-end; margin-bottom: 3px; margin-right: 1px; }
.list-wrap { display: flex; height: 491px; border-top: 1px solid #262626; }
.list { flex: 1; margin: 0; padding: 0; list-style: none; overflow: hidden; background: #1e1e1e; font-weight: 500; font-size: 25px; letter-spacing: 0; }
.list li { display: flex; align-items: center; gap: 20px; height: 48px; padding-left: 6px; }
.list li i { width: 26px; height: 26px; margin-bottom: 6px; background: #ebebeb; border: 2px solid #888; }
.list li.sel { background: #464646; }
.list li.sel i { background: #fce94f; border-color: #c4a000; }
.scroll { width: 28px; display: flex; flex-direction: column; background: #383838; border: 1px solid #292929; border-bottom: 0; border-top: 0; }
.scroll .btn, .scroll .thumb { display: flex; align-items: center; justify-content: center; border: 2px solid #505050; background: #3f3f3f; height: 26px; outline: 1px solid #292929; }
.scroll .track { height: 235px; } .scroll .thumb { height: 53px; } .scroll .low { flex: 1; height: auto; }
.nav { display: flex; align-items: center; height: 50px; padding: 8px 0 0 4px; }
.nav > * { flex: none; }
.nav .ic { width: 33px; height: 33px; margin-right: 16.500px; }
.nav .flip { transform: scaleX(-1); }
.nav .count { width: 124px; margin-left: -6px; font-size: 23px; font-weight: 500; letter-spacing: -.5px; white-space: nowrap; }
.nav .bulb { display: flex; align-items: center; justify-content: center; width: 44px; height: 42px; border: 2px solid #505050; border-radius: 5px; box-shadow: 0 0 0 2px #262626; background: #3a3a3a; margin: 0 53px 0 2px; }
.nav .bulb .ic { width: 31px; margin: 0; }
.nav .cross { width: 31px; height: 31px; margin-right: 18px; }
.nav .cross + .ic { margin-right: 0; }
.handle { width: 10px; padding: 284px 0 0 6px; }
.form { flex: 1; padding: 40px 36px 0 39px; border: 2px solid #282828; border-right-width: 1px; }
.field { display: flex; align-items: center; height: 46px; margin-bottom: 16px; }
.field label { width: 174px; letter-spacing: -.3px; margin-left: -1px; padding-top: 1px; }
.spin { flex: 1; display: flex; height: 46px; border: 2px solid #272727; border-radius: 5px; background: #303030; color: #606060; }
.spin span { flex: 1; margin: 3px 3px 3px 4px; padding-right: 11px; background: #1e1e1e; text-align: right; line-height: 38px; letter-spacing: .2px; }
.spin b { width: 27px; display: flex; flex-direction: column; align-items: center; justify-content: space-evenly; border-right: 2px solid #5a5a5a; border-top: 2px solid #5a5a5a; background: #424242; border-radius: 0 5px 5px 0; }
.field.line { height: 36px; margin-bottom: 24px; margin-top: 20px; }
.field.line + .field.line { margin-top: 0; }
.text { flex: 1; height: 36px; padding-left: 4px; line-height: 36px; background: #cbcbcb; }
.text.num { letter-spacing: .3px; }
.foot { display: flex; align-items: center; justify-content: space-between; height: 56px; padding: 4px 6px 0 4px; }
.show { display: flex; align-items: center; width: 234px; height: 43px; border: 2px solid #5a5a5a; border-radius: 5px; box-shadow: 0 0 0 2px #262626; background: linear-gradient(#4b4b4b, #3c3c3c); font-size: 19.500px; letter-spacing: .2px; font-weight: 500; color: #ddd; white-space: nowrap; }
.show .ic { width: 28px; margin: 0 6px 0 4px; }
.views { display: flex; gap: 5px; }
.view { width: 43px; height: 43px; display: flex; align-items: center; justify-content: center; border: 2px solid transparent; border-radius: 5px; }
.view.on { border-color: #555; box-shadow: 0 0 0 2px #262626; }
.view .ic { width: 30px; height: 30px; }

/* hand-drawn callouts */
.marks { position: absolute; left: 0; top: 0; fill: none; stroke: #ee4023; stroke-width: 4.500; pointer-events: none; }
```
